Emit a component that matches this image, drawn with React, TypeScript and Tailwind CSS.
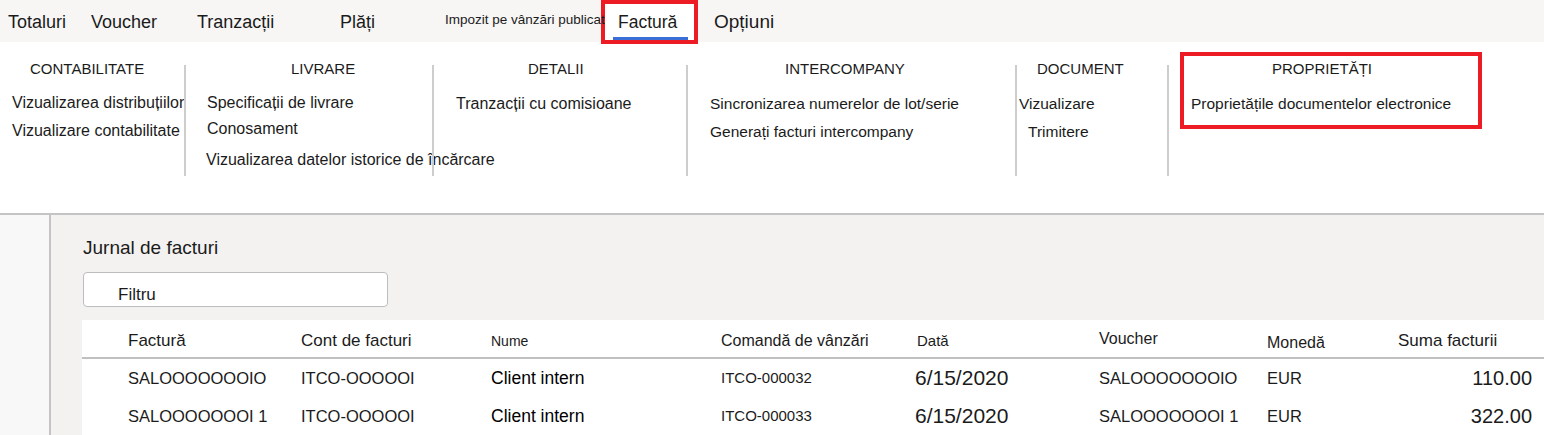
export default function App() {
  const sep = <div className="w-[2px] bg-[#cdcdcd] mt-[23px] h-[111px] shrink-0" />;
  const rows = [
    ["SALOOOOOOOIO", "ITCO-OOOOOI", "Client intern", "ITCO-000032", "6/15/2020", "SALOOOOOOOIO", "EUR", "110.00"],
    ["SALOOOOOOOI 1", "ITCO-OOOOOI", "Client intern", "ITCO-000033", "6/15/2020", "SALOOOOOOOI 1", "EUR", "322.00"],
  ];
  return (
    <div className="w-[1544px] h-[435px] overflow-hidden bg-white text-[#1b1b1b] font-['Liberation_Sans',Arial,sans-serif]">
      {/* Tab bar */}
      <div className="h-[42px] bg-[#f7f6f5] flex items-start text-[18px] leading-[20px]">
        <div className="w-[91px] pl-[8px] pt-[12px] shrink-0">Totaluri</div>
        <div className="w-[106px] pt-[12px] shrink-0">Voucher</div>
        <div className="w-[143px] pt-[12px] shrink-0">Tranzacții</div>
        <div className="w-[105px] pt-[12px] shrink-0">Plăți</div>
        <div className="relative z-20 w-[156px] pt-[12px] shrink-0 text-[13.5px] leading-[16px] whitespace-nowrap">Impozit pe vânzări publicat</div>
        <div className="relative z-10 w-[97px] h-[44px] border-[4px] border-[#ed1c24] bg-white shrink-0 flex flex-col">
          <div className="pt-[8px] pl-[13px] text-[17.5px]">Factură</div>
          <div className="mt-[5px] ml-[8px] w-[75px] h-[3px] bg-[#3a6fd6]" />
        </div>
        <div className="pl-[16px] pt-[12px] shrink-0 text-[19px]">Opțiuni</div>
      </div>

      {/* Ribbon */}
      <div className="h-[173px] flex border-b-2 border-[#c4c4c4] text-[16px] leading-[20px] whitespace-nowrap">
        <div className="w-[184px] shrink-0 flex flex-col pt-[18px]">
          <div className="h-[18px] leading-[18px] text-[15px] pl-[30px]">CONTABILITATE</div>
          <div className="mt-[15px] pl-[12px] flex flex-col gap-[8px]">
            <div>Vizualizarea distribuțiilor</div>
            <div>Vizualizare contabilitate</div>
          </div>
        </div>
        {sep}
        <div className="w-[246px] shrink-0 flex flex-col pt-[18px]">
          <div className="h-[18px] leading-[18px] text-[15px] pl-[105px]">LIVRARE</div>
          <div className="mt-[15px] pl-[21px]">Specificații de livrare</div>
          <div className="mt-[6px] pl-[21px]">Conosament</div>
          <div className="mt-[11px] pl-[20px]">Vizualizarea datelor istorice de încărcare</div>
        </div>
        {sep}
        <div className="w-[252px] shrink-0 flex flex-col pt-[18px]">
          <div className="h-[18px] leading-[18px] text-[15px] pl-[94px]">DETALII</div>
          <div className="mt-[16px] pl-[22px]">Tranzacții cu comisioane</div>
        </div>
        {sep}
        <div className="w-[327px] shrink-0 flex flex-col pt-[18px] text-[15.5px]">
          <div className="h-[18px] leading-[18px] text-[15px] pl-[97px]">INTERCOMPANY</div>
          <div className="mt-[16px] pl-[22px] flex flex-col gap-[8px]">
            <div>Sincronizarea numerelor de lot/serie</div>
            <div>Generați facturi intercompany</div>
          </div>
        </div>
        {sep}
        <div className="w-[150px] shrink-0 flex flex-col pt-[18px] text-[15.5px]">
          <div className="h-[18px] leading-[18px] text-[15px] pl-[20px]">DOCUMENT</div>
          <div className="mt-[16px] pl-[2px]">Vizualizare</div>
          <div className="mt-[8px] pl-[11px]">Trimitere</div>
        </div>
        {sep}
        <div className="shrink-0 text-[15.5px]">
          <div className="ml-[11px] mt-[10px] w-[302px] h-[77px] border-[4px] border-[#ed1c24] flex flex-col">
            <div className="pt-[4px] h-[22px] leading-[18px] text-[15px] pl-[88px]">PROPRIETĂȚI</div>
            <div className="mt-[16px] pl-[7px]">Proprietățile documentelor electronice</div>
          </div>
        </div>
      </div>

      {/* Main */}
      <div className="flex h-[220px]">
        <div className="w-[51px] shrink-0 bg-[#f8f8f8] border-r-2 border-[#c4c4c4]" />
        <div className="flex-1 bg-[#f3f2f1] pl-[31px] pt-[21px] flex flex-col">
          <div className="text-[19px] leading-[24px] pl-[1px]">Jurnal de facturi</div>
          <div className="mt-[12px] ml-[1px] w-[305px] h-[35px] border border-[#bdbdbd] rounded-[4px] bg-white pl-[34px] pt-[12px] text-[17px] leading-[20px]">
            Filtru
          </div>
          <div className="mt-[13px] bg-white flex-1">
            <div className="h-[39px] border-b-2 border-[#c0c0c0] grid grid-cols-[173px_190px_230px_196px_182px_168px_131px_134px] pl-[46px] items-center pt-[5px] text-[17px] leading-[20px] whitespace-nowrap">
              <div>Factură</div>
              <div>Cont de facturi</div>
              <div className="text-[14px]">Nume</div>
              <div className="text-[16px]">Comandă de vânzări</div>
              <div className="text-[15px]">Dată</div>
              <div className="mb-[4px] text-[16px]">Voucher</div>
              <div className="mt-[4px] text-[16px]">Monedă</div>
              <div>Suma facturii</div>
            </div>
            {rows.map((r, i) => (
              <div key={i} className="h-[38px] grid grid-cols-[173px_190px_230px_196px_182px_168px_131px_134px] pl-[46px] items-center whitespace-nowrap">
                <div className="text-[16.5px]">{r[0]}</div>
                <div className="text-[16.5px]">{r[1]}</div>
                <div className="text-[17.5px] text-black">{r[2]}</div>
                <div className="text-[15px]">{r[3]}</div>
                <div className="text-[21px] -ml-[2px]">{r[4]}</div>
                <div className="text-[16.5px]">{r[5]}</div>
                <div className="text-[16.5px]">{r[6]}</div>
                <div className="text-[20px] text-right">{r[7]}</div>
              </div>
            ))}
          </div>
        </div>
      </div>
    </div>
  );
}
